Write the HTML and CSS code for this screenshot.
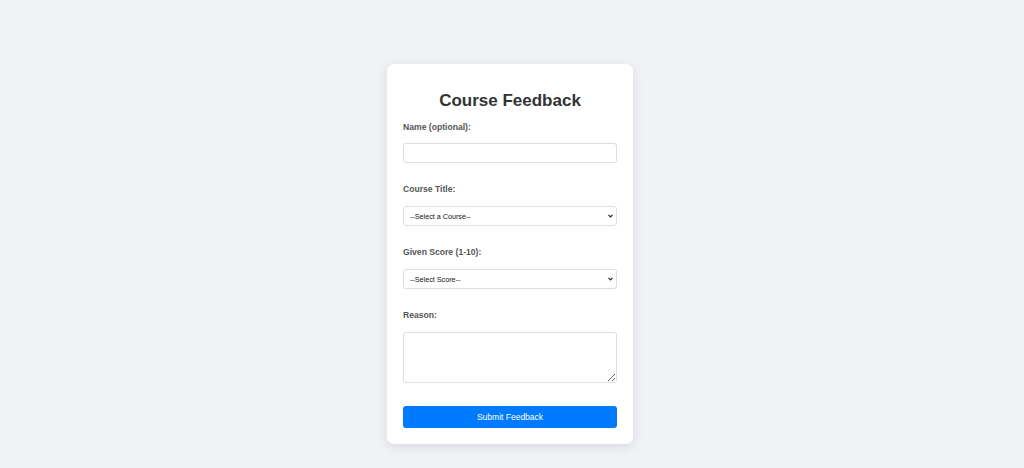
FILE: index.html
```html
<!DOCTYPE html>
<html lang="en">
<head>
<meta charset="utf-8">
<title>Course Feedback</title>
<link rel="stylesheet" href="styles.css">
</head>
<body>
<div class="page">
  <form class="card">
    <h2 class="title">Course Feedback</h2>
    <label class="label" for="name">Name (optional):</label>
    <input class="field field-text" id="name" type="text">
    <label class="label" for="course">Course Title:</label>
    <select class="field field-select" id="course">
      <option>--Select a Course--</option>
    </select>
    <label class="label" for="score">Given Score (1-10):</label>
    <select class="field field-select" id="score">
      <option>--Select Score--</option>
    </select>
    <label class="label" for="reason">Reason:</label>
    <textarea class="field field-area" id="reason"></textarea>
    <button class="submit" type="button">Submit Feedback</button>
  </form>
</div>
</body>
</html>
```
FILE: styles.css
```css
html, body {
  margin: 0;
  padding: 0;
  background: #f0f2f5;
  font-family: "Liberation Sans", Arial, sans-serif;
}
.page {
  display: flex;
  justify-content: center;
  align-items: flex-start;
  padding: 64px 4px 0 0;
  min-height: 468px;
  box-sizing: border-box;
}
.card {
  width: 246px;
  box-sizing: border-box;
  padding: 16px 16px 16px;
  background: #fff;
  border-radius: 7px;
  box-shadow: 0 3px 12px rgba(0, 0, 0, 0.1);
  display: flex;
  flex-direction: column;
}
.title {
  margin: 10.5px 0 11.9px;
  font-size: 17px;
  line-height: 20px;
  font-weight: bold;
  color: #333;
  text-align: center;
}
.label {
  display: block;
  font-size: 8.6px;
  line-height: 10px;
  font-weight: bold;
  color: #555;
  margin-bottom: 12.25px;
}
.field {
  box-sizing: border-box;
  width: 214px;
  margin: 0 0 20.5px;
  border: 1px solid #ddd;
  border-radius: 3px;
  background-color: #fff;
  font-family: "Liberation Sans", Arial, sans-serif;
  font-size: 7.2px;
  color: #111;
}
.field-text {
  height: 20px;
  margin-top: -1.75px;
  margin-bottom: 21.25px;
  padding: 0 5px;
}
.field-select {
  height: 20px;
  padding: 0 12px 0 6px;
  -webkit-appearance: none;
  appearance: none;
  background-image: url("data:image/svg+xml;utf8,<svg xmlns='http://www.w3.org/2000/svg' width='6' height='4' viewBox='0 0 6 4'><path d='M0.6 0.6 L3 3 L5.4 0.6' fill='none' stroke='%23222' stroke-width='1.4'/></svg>");
  background-repeat: no-repeat;
  background-position: right 3.5px center;
  background-size: 5px 4px;
}
.field-area {
  height: 51.25px;
  margin-bottom: 22.75px;
  padding: 5px;
  resize: vertical;
}
.submit {
  height: 22.5px;
  width: 214px;
  border: none;
  border-radius: 3px;
  background: #007bff;
  color: #fff;
  font-family: "Liberation Sans", Arial, sans-serif;
  font-size: 8.5px;
  padding: 0;
  cursor: pointer;
}
```
